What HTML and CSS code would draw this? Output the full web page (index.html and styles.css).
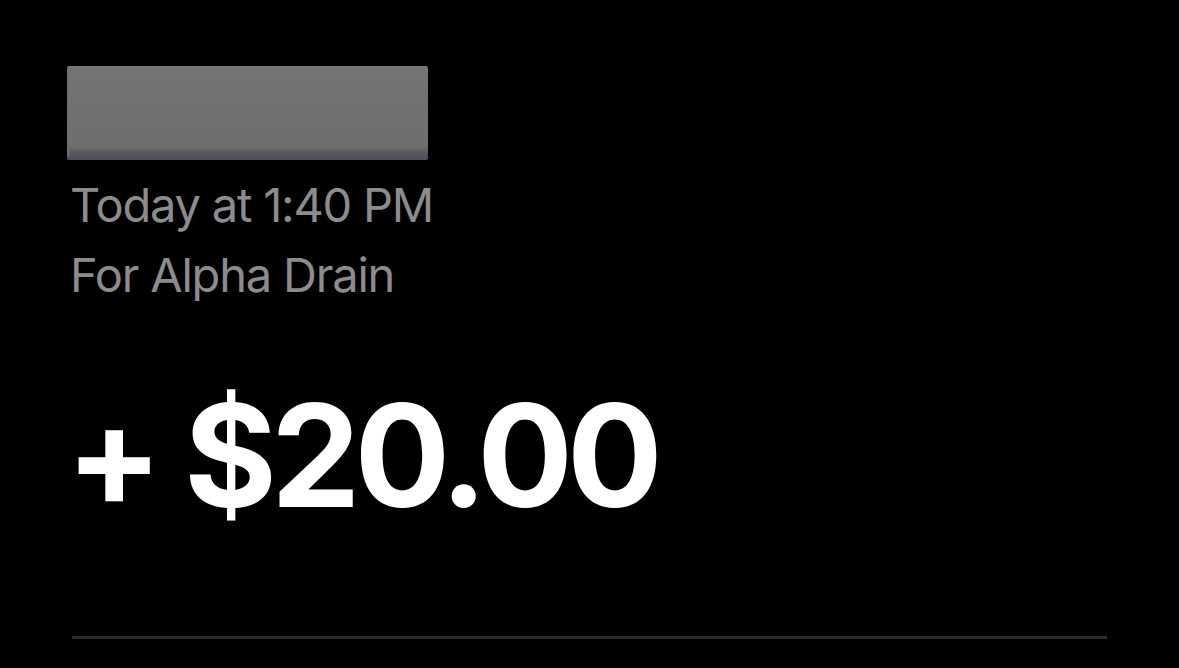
FILE: index.html
```html
<!DOCTYPE html>
<html lang="en">

<head>
    <meta charset="UTF-8">
    <meta name="viewport" content="width=device-width, initial-scale=1.0">
    <title>Payment</title>
    <link rel="stylesheet" href="styles.css">
</head>

<body>
    <div class="payment">
        <div class="redacted"></div>
        <div class="meta">
            <p class="meta-line">Today at 1:40 PM</p>
            <p class="meta-line">For Alpha Drain</p>
        </div>
        <h1 class="amount">+ $20.00</h1>
        <hr class="divider">
    </div>
</body>

</html>
```

FILE: styles.css
```css
body {
    margin: 0;
    padding: 0;
    background-color: #000;
    font-family: Inter, "Noto Sans", sans-serif;
    color: #fff;
}

.payment {
    padding: 66px 72px 0 72px;
}

.redacted {
    width: 361px;
    height: 94px;
    margin-left: -5px;
    border-radius: 3px;
    background: linear-gradient(180deg, #747474 0%, #6e6e6e 86%, #5a5a5e 92%, #4c4c56 100%);
    box-shadow: inset 0 -3px 0 #505060, inset 2px 0 0 #6c6c7a, inset 0 1px 0 #7c7c7c;
}

.meta {
    margin: 10px 0 0 -2px;
}

.meta-line {
    margin: 0;
    font-size: 47px;
    line-height: 70px;
    color: #8c8c8c;
    letter-spacing: -1.2px;
}

.amount {
    margin: 70px 0 0 -6px;
    font-size: 142px;
    font-weight: 700;
    line-height: 150px;
    letter-spacing: -6px;
}

.divider {
    margin: 106px 0 0 0;
    border: none;
    height: 3px;
    background: #2a2a2a;
}
```
